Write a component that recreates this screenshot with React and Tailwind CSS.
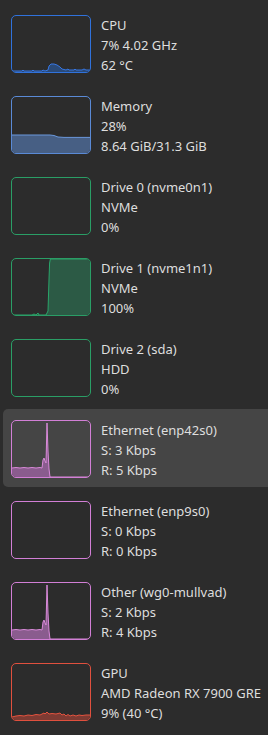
const items = [
  {
    title: "CPU",
    lines: ["7% 4.02 GHz", "62 °C"],
    border: "border-[#3072dc]",
    stroke: "#3677e3",
    fill: "#2a4a78",
    path: "M0 55 L10 55 L11 54 L12 55 L20 55 L21 54 L22 55 L30 55 L31 54 L33 55 L36 54 L37 50 L39 48 L42 48 L45 49 L48 51 L50 53 L54 54 L56 53 L57 54 L62 54 L63 53 L64 54 L70 54 L72 53 L74 54 L78 54",
  },
  {
    title: "Memory",
    lines: ["28%", "8.64 GiB/31.3 GiB"],
    border: "border-[#5a8ad6]",
    stroke: "#6a98dc",
    fill: "#475f84",
    path: "M0 38 L38 38 L42 38.5 L46 40 L52 40.4 L78 40.4",
  },
  {
    title: "Drive 0 (nvme0n1)",
    lines: ["NVMe", "0%"],
    border: "border-[#2a9e66]",
    stroke: "#2aa56a",
    fill: "#2c5a45",
    path: null,
  },
  {
    title: "Drive 1 (nvme1n1)",
    lines: ["NVMe", "100%"],
    border: "border-[#2a9e66]",
    stroke: "#2aa56a",
    fill: "#2c5a45",
    path: "M0 56 L20 56 L22 55 L24 56 L26 54 L27 56 L34 56 L36 52 L37 20 L37.6 4 L38.4 0 L78 0",
  },
  {
    title: "Drive 2 (sda)",
    lines: ["HDD", "0%"],
    border: "border-[#2a9e66]",
    stroke: "#2aa56a",
    fill: "#2c5a45",
    path: null,
  },
  {
    title: "Ethernet (enp42s0)",
    lines: ["S: 3 Kbps", "R: 5 Kbps"],
    border: "border-[#d27fd6]",
    stroke: "#d98ad9",
    fill: "#8a5c8e",
    path: "M0 47 L4 46.5 L8 47 L12 46.5 L16 47 L20 46.5 L24 47 L28 46.5 L30 47 L31 39 L32 37 L33 40 L34 42 L35 2 L36 30 L37 48 L38 56 L78 56",
    active: true,
  },
  {
    title: "Ethernet (enp9s0)",
    lines: ["S: 0 Kbps", "R: 0 Kbps"],
    border: "border-[#d27fd6]",
    stroke: "#d98ad9",
    fill: "#8a5c8e",
    path: null,
  },
  {
    title: "Other (wg0-mullvad)",
    lines: ["S: 2 Kbps", "R: 4 Kbps"],
    border: "border-[#d27fd6]",
    stroke: "#d98ad9",
    fill: "#8a5c8e",
    path: "M0 47 L4 46.5 L8 47 L12 46.5 L16 47 L20 46.5 L24 47 L28 46.5 L30 47 L31 39 L32 37 L33 40 L34 42 L35 2 L36 30 L37 48 L38 56 L78 56",
  },
  {
    title: "GPU",
    lines: ["AMD Radeon RX 7900 GRE", "9% (40 °C)"],
    border: "border-[#e0503e]",
    stroke: "#e5533f",
    fill: "#7d3b33",
    path: "M0 53 L4 52 L8 51.5 L12 52 L16 51 L20 51.5 L24 50.5 L28 51 L32 49 L33 50 L35 48 L37 50 L40 49.5 L44 50 L48 49 L50 51 L52 50 L54 52 L56 50.5 L58 52 L61 51 L64 52 L67 51 L70 51.5 L74 51 L78 51",
  },
];

function Graph({ item }) {
  return (
    <div className={`w-[80px] h-[58px] shrink-0 border ${item.border} rounded-[5px] overflow-hidden`}>
      {item.path && (
        <svg viewBox="0 0 78 56" preserveAspectRatio="none" className="w-full h-full block">
          <path d={`${item.path} L78 57 L0 57 Z`} fill={item.fill} stroke="none" />
          <path d={item.path} fill="none" stroke={item.stroke} strokeWidth="1" />
        </svg>
      )}
    </div>
  );
}

export default function App() {
  return (
    <div
      className="w-[268px] h-[735px] bg-[#2c2c2c] pt-[4px] flex flex-col gap-[3px] overflow-hidden text-[#dedede]"
      style={{ fontFamily: "'Noto Sans', 'Open Sans', sans-serif" }}
    >
      {items.map((item) => (
        <div
          key={item.title}
          className={`ml-[3px] h-[78px] pl-[8px] pt-[11px] flex items-start gap-[10px] rounded-l-[5px] ${
            item.active ? "bg-[#454545]" : ""
          }`}
        >
          <Graph item={item} />
          <div className="text-[13px] leading-[20px] whitespace-nowrap">
            <div>{item.title}</div>
            {item.lines.map((l) => (
              <div key={l}>{l}</div>
            ))}
          </div>
        </div>
      ))}
    </div>
  );
}
